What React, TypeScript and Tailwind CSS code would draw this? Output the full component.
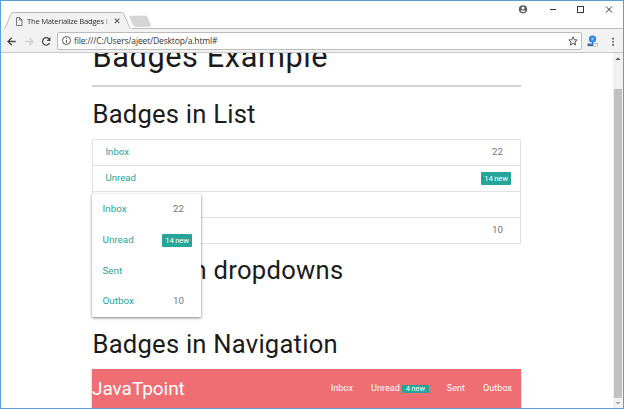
import type { ReactNode } from "react";

const roboto = "font-['Roboto','Liberation_Sans',sans-serif]";
const ui = "font-['Open_Sans','Noto_Sans',sans-serif]";

function NewBadge({ children, className = "" }: { children: ReactNode; className?: string }) {
  return (
    <span className={`flex h-[13px] w-[30px] items-center justify-center rounded-[1px] bg-[#26a69a] text-[7.700px] leading-none tracking-[-0.200px] text-white ${className}`}>
      {children}
    </span>
  );
}

function TabStrip() {
  return (
    <div className="relative flex h-[28px] shrink-0 bg-white">
      <svg className="absolute inset-0" width="622" height="28" viewBox="0 0 622 28" fill="none">
        <path d="M0 28.500H2Q3.500 28.500 4.500 26L10 13Q10.800 11.500 12.500 11.500H120Q122 11.500 123 13.500L129 27Q129.600 28.500 131 28.500Z" fill="#f2f2f2" />
        <path d="M0 28.500H2Q3.500 28.500 4.500 26L10 13Q10.800 11.500 12.500 11.500H120Q122 11.500 123 13.500L129 27Q129.600 28.500 131 28.500" stroke="#b8b8b8" />
        <path d="M129.500 15H144Q145.500 15 146 16L149.500 24Q150 25.500 148.500 25.500H134.500Q133 25.500 132.300 24L128.700 16.500Q128 15 129.500 15Z" fill="#d5d5d5" stroke="#c8c8c8" strokeWidth=".5" />
        <path d="M131 27.500H622" stroke="#bdbdbd" />
        <path d="M15.500 16.500H18.500L21 19V24.500H15.500ZM18.500 16.500V19H21" stroke="#6a6a6a" strokeWidth=".9" />
        <path d="m113.800 17.700 4.500 4.500m0-4.500-4.500 4.500" stroke="#555" strokeWidth="1.100" />
        <circle cx="522" cy="8.300" r="4.100" fill="#5a5a5a" />
        <circle cx="522" cy="6.900" r="1.500" fill="#fff" />
        <path d="M519.300 9.500H524.700Q523.700 11.300 522 11.300T519.300 9.500Z" fill="#fff" />
        <path d="M549 8.500H555" stroke="#333" />
        <rect x="576.500" y="5.500" width="6" height="6" stroke="#333" />
        <path d="m605 5.500 6 6m0-6-6 6" stroke="#333" />
      </svg>
      <span className={`relative ml-[26px] mt-[14px] h-3 w-[82px] overflow-hidden whitespace-nowrap text-[7.700px] leading-[12px] tracking-[-0.270px] text-[#333] [mask-image:linear-gradient(to_right,black_92%,transparent)] ${ui}`}>
        The Materialize Badges Example
      </span>
    </div>
  );
}

function Toolbar() {
  return (
    <div className="flex h-[24px] shrink-0 items-center border-b border-[#c9c9c9] bg-[#f2f2f2]">
      <svg width="56" height="22" viewBox="0 0 56 22" fill="none" strokeWidth="1.300">
        <path d="M14.700 11.500H7M10.700 7.700 7 11.500 10.700 15.300" stroke="#4a4a4a" />
        <path d="M24.300 11.500H32M28.300 7.700 32 11.500 28.300 15.300" stroke="#cfcfcf" />
        <path d="M48.300 9.300A3.700 3.700 0 1 0 48.600 13" stroke="#4a4a4a" />
        <path d="M49.500 7V11H45.500Z" fill="#4a4a4a" />
      </svg>
      <div className="flex h-[18px] w-[525px] items-center rounded-[2px] border border-[#bcbcbc] bg-white">
        <svg className="ml-[3px]" width="11" height="11" viewBox="0 0 11 11" fill="none" stroke="#555">
          <circle cx="5.500" cy="5.500" r="4" />
          <path d="M5.500 5V8M5.500 3V4.100" />
        </svg>
        <span className={`ml-[2px] text-[8.500px] leading-[14px] tracking-[-0.150px] text-[#333] ${ui}`}>file:///C:/Users/ajeet/Desktop/a.html#</span>
        <svg className="ml-auto mr-[3px]" width="10" height="10" viewBox="0 0 10 10" fill="none" stroke="#555">
          <path d="m5 .9 1.200 2.800 3 .3-2.300 2 .7 3L5 7.400 2.400 9l.7-3L.8 4l3-.3Z" />
        </svg>
      </div>
      <svg width="41" height="22" viewBox="0 0 41 22">
        <circle cx="10.500" cy="9" r="3.600" fill="#2582e6" />
        <rect x="9.200" y="7.500" width="2.600" height="3" rx=".6" fill="#8fc2f8" />
        <path d="M10.500 12V14" stroke="#2582e6" />
        <rect x="5.500" y="13.500" width="6" height="2.700" fill="#416fa9" />
        <rect x="11.500" y="13.500" width="4" height="2.500" fill="#fff" stroke="#aaa" strokeWidth=".7" />
        <path d="M30.200 7.800h1.700v1.700h-1.700zm0 3.100h1.700v1.700h-1.700zm0 3.100h1.700v1.700h-1.700z" fill="#555" />
      </svg>
    </div>
  );
}

function Scrollbar() {
  return (
    <div className="flex w-[10px] shrink-0 flex-col items-center bg-[#f1f1f1]">
      <svg width="10" height="36" viewBox="0 0 10 36"><path d="m2.500 7 2.500-2.500L7.500 7Z" fill="#505050" /></svg>
      <div className="w-[8px] flex-1 bg-[#c1c1c1]" />
      <svg width="10" height="10" viewBox="0 0 10 10"><path d="m2.500 4 2.500 2.500L7.500 4Z" fill="#a3a3a3" /></svg>
    </div>
  );
}

function Dropdown() {
  return (
    <div className="absolute left-0 top-[55px] flex h-[123px] w-[109px] flex-col rounded-[1px] bg-white text-[9.900px] text-[#26a69a] shadow-[0_1px_3px_rgba(0,0,0,0.5)]">
      <div className="flex h-[31px] items-center pl-[10.500px] pr-[17px]"><span>Inbox</span><span className="ml-auto text-[9.700px] text-[#757575]">22</span></div>
      <div className="flex h-[31px] items-center pl-[10.500px] pr-[9px]"><span>Unread</span><NewBadge className="ml-auto">14 new</NewBadge></div>
      <div className="flex h-[30px] items-center pl-[10.500px]">Sent</div>
      <div className="flex h-[31px] items-center pl-[10.500px] pr-[17px]"><span>Outbox</span><span className="ml-auto text-[9.700px] text-[#757575]">10</span></div>
    </div>
  );
}

export default function App() {
  return (
    <div className={`flex h-[409px] w-[624px] flex-col overflow-hidden border border-[#5a9fdc] bg-white ${roboto}`}>
      <TabStrip />
      <Toolbar />
      <div className="flex min-h-0 flex-1">
        <main className="min-w-0 flex-1 overflow-hidden pl-[92px] text-[#1b1b1b]">
          <div className="-ml-px w-[429px]">
            <h1 className="-mt-[14px] h-[46px] whitespace-nowrap pl-[0.500px] text-[30.700px] leading-[36px] tracking-[0.600px]">Badges Example</h1>
            <div className="h-[2px] bg-[#d2d2d2]" />
            <h2 className="h-[52px] whitespace-nowrap pl-[0.500px] pt-[11px] text-[25.600px] leading-[32px] tracking-[0.220px]">Badges in List</h2>
            <div className="relative">
              <ul className="h-[105px] divide-y divide-[#e2e2e2] rounded-[1px] border border-[#e2e2e2] text-[9.600px] text-[#26a69a]">
                <li className="flex h-[26px] items-center pl-[12.500px] pr-[17px]"><span>Inbox</span><span className="ml-auto text-[9.700px] text-[#757575]">22</span></li>
                <li className="flex h-[26px] items-center pl-[12.500px] pr-[9px]"><span>Unread</span><NewBadge className="ml-auto">14 new</NewBadge></li>
                <li className="flex h-[26px] items-center pl-[12.500px]">Sent</li>
                <li className="flex h-[25px] items-center pl-[12.500px] pr-[17px]"><span>Outbox</span><span className="ml-auto text-[9.700px] text-[#757575]">10</span></li>
              </ul>
              <Dropdown />
            </div>
            <h2 className="h-[74px] whitespace-nowrap pl-[0.500px] pt-[10px] text-[25.600px] leading-[32px] tracking-[0.260px]">Badges in dropdowns</h2>
            <h2 className="h-[51px] whitespace-nowrap pl-[0.500px] pt-[10px] text-[25.600px] leading-[32px] tracking-[0.230px]">Badges in Navigation</h2>
            <nav className="flex h-[40px] items-center bg-[#ee6e73] text-white shadow-[0_1px_2px_rgba(0,0,0,0.3)]">
              <span className="text-[19px] tracking-[-0.050px]">JavaTpoint</span>
              <div className="ml-auto flex items-center gap-[18px] pr-[9px] text-[9.100px]">
                <span>Inbox</span>
                <span className="flex items-center gap-[2px]">
                  Unread
                  <span className="flex h-[8px] w-[27px] items-center justify-center rounded-[1px] bg-[#26a69a] text-[7.300px]">4 new</span>
                </span>
                <span>Sent</span>
                <span>Outbox</span>
              </div>
            </nav>
          </div>
        </main>
        <Scrollbar />
      </div>
    </div>
  );
}
